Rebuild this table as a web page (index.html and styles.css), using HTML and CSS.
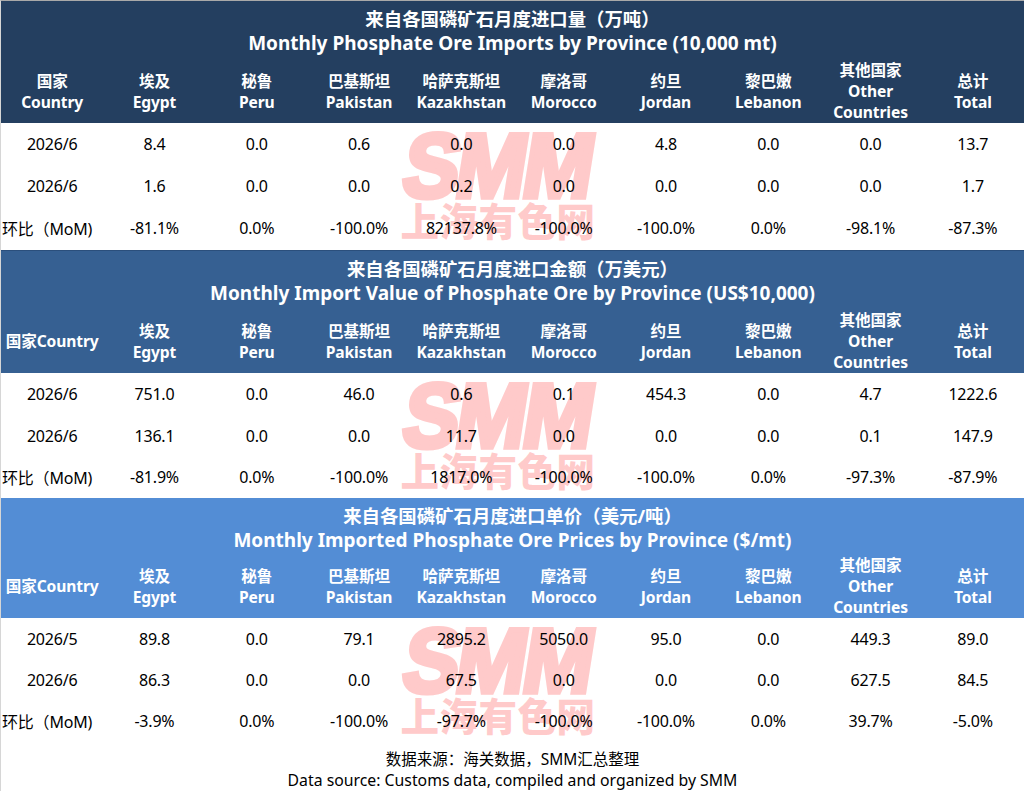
FILE: index.html
```html
<!DOCTYPE html>
<html lang="zh-CN">
<head>
<meta charset="utf-8">
<title>Phosphate Ore Imports</title>
<link rel="stylesheet" href="styles.css">
</head>
<body>
<div class="sheet">
  <section class="block block-1">
    <header class="block-head">
      <div class="title">
        <div class="title-cn">来自各国磷矿石月度进口量（万吨）</div>
        <div class="title-en">Monthly Phosphate Ore Imports by Province (10,000 mt)</div>
      </div>
      <div class="cols">
        <div class="col"><span>国家</span><span>Country</span></div>
        <div class="col"><span>埃及</span><span>Egypt</span></div>
        <div class="col"><span>秘鲁</span><span>Peru</span></div>
        <div class="col"><span>巴基斯坦</span><span>Pakistan</span></div>
        <div class="col"><span>哈萨克斯坦</span><span>Kazakhstan</span></div>
        <div class="col"><span>摩洛哥</span><span>Morocco</span></div>
        <div class="col"><span>约旦</span><span>Jordan</span></div>
        <div class="col"><span>黎巴嫩</span><span>Lebanon</span></div>
        <div class="col"><span>其他国家</span><span>Other</span><span>Countries</span></div>
        <div class="col"><span>总计</span><span>Total</span></div>
      </div>
    </header>
    <div class="block-body">
      <div class="wm"><div class="wm-smm">SMM</div><div class="wm-cn">上海有色网</div></div>
      <div class="row"><div>2026/6</div><div>8.4</div><div>0.0</div><div>0.6</div><div>0.0</div><div>0.0</div><div>4.8</div><div>0.0</div><div>0.0</div><div>13.7</div></div>
      <div class="row"><div>2026/6</div><div>1.6</div><div>0.0</div><div>0.0</div><div>0.2</div><div>0.0</div><div>0.0</div><div>0.0</div><div>0.0</div><div>1.7</div></div>
      <div class="row"><div class="lbl">环比（MoM)</div><div>-81.1%</div><div>0.0%</div><div>-100.0%</div><div>82137.8%</div><div>-100.0%</div><div>-100.0%</div><div>0.0%</div><div>-98.1%</div><div>-87.3%</div></div>
    </div>
  </section>

  <section class="block block-2">
    <header class="block-head">
      <div class="title">
        <div class="title-cn">来自各国磷矿石月度进口金额（万美元）</div>
        <div class="title-en">Monthly Import Value of Phosphate Ore by Province (US$10,000)</div>
      </div>
      <div class="cols">
        <div class="col"><span>国家Country</span></div>
        <div class="col"><span>埃及</span><span>Egypt</span></div>
        <div class="col"><span>秘鲁</span><span>Peru</span></div>
        <div class="col"><span>巴基斯坦</span><span>Pakistan</span></div>
        <div class="col"><span>哈萨克斯坦</span><span>Kazakhstan</span></div>
        <div class="col"><span>摩洛哥</span><span>Morocco</span></div>
        <div class="col"><span>约旦</span><span>Jordan</span></div>
        <div class="col"><span>黎巴嫩</span><span>Lebanon</span></div>
        <div class="col"><span>其他国家</span><span>Other</span><span>Countries</span></div>
        <div class="col"><span>总计</span><span>Total</span></div>
      </div>
    </header>
    <div class="block-body">
      <div class="wm"><div class="wm-smm">SMM</div><div class="wm-cn">上海有色网</div></div>
      <div class="row"><div>2026/6</div><div>751.0</div><div>0.0</div><div>46.0</div><div>0.6</div><div>0.1</div><div>454.3</div><div>0.0</div><div>4.7</div><div>1222.6</div></div>
      <div class="row"><div>2026/6</div><div>136.1</div><div>0.0</div><div>0.0</div><div>11.7</div><div>0.0</div><div>0.0</div><div>0.0</div><div>0.1</div><div>147.9</div></div>
      <div class="row"><div class="lbl">环比（MoM)</div><div>-81.9%</div><div>0.0%</div><div>-100.0%</div><div>1817.0%</div><div>-100.0%</div><div>-100.0%</div><div>0.0%</div><div>-97.3%</div><div>-87.9%</div></div>
    </div>
  </section>

  <section class="block block-3">
    <header class="block-head">
      <div class="title">
        <div class="title-cn">来自各国磷矿石月度进口单价（美元/吨）</div>
        <div class="title-en">Monthly Imported Phosphate Ore Prices by Province ($/mt)</div>
      </div>
      <div class="cols">
        <div class="col"><span>国家Country</span></div>
        <div class="col"><span>埃及</span><span>Egypt</span></div>
        <div class="col"><span>秘鲁</span><span>Peru</span></div>
        <div class="col"><span>巴基斯坦</span><span>Pakistan</span></div>
        <div class="col"><span>哈萨克斯坦</span><span>Kazakhstan</span></div>
        <div class="col"><span>摩洛哥</span><span>Morocco</span></div>
        <div class="col"><span>约旦</span><span>Jordan</span></div>
        <div class="col"><span>黎巴嫩</span><span>Lebanon</span></div>
        <div class="col"><span>其他国家</span><span>Other</span><span>Countries</span></div>
        <div class="col"><span>总计</span><span>Total</span></div>
      </div>
    </header>
    <div class="block-body">
      <div class="wm"><div class="wm-smm">SMM</div><div class="wm-cn">上海有色网</div></div>
      <div class="row"><div>2026/5</div><div>89.8</div><div>0.0</div><div>79.1</div><div>2895.2</div><div>5050.0</div><div>95.0</div><div>0.0</div><div>449.3</div><div>89.0</div></div>
      <div class="row"><div>2026/6</div><div>86.3</div><div>0.0</div><div>0.0</div><div>67.5</div><div>0.0</div><div>0.0</div><div>0.0</div><div>627.5</div><div>84.5</div></div>
      <div class="row"><div class="lbl">环比（MoM)</div><div>-3.9%</div><div>0.0%</div><div>-100.0%</div><div>-97.7%</div><div>-100.0%</div><div>-100.0%</div><div>0.0%</div><div>39.7%</div><div>-5.0%</div></div>
    </div>
  </section>

  <footer class="source">
    <div class="source-cn">数据来源：海关数据，SMM汇总整理</div>
    <div class="source-en">Data source: Customs data, compiled and organized by SMM</div>
  </footer>
</div>
</body>
</html>
```

FILE: styles.css
```css
html, body {
  margin: 0;
  padding: 0;
  background: #ffffff;
}

body {
  font-family: "Noto Sans", "Noto Sans CJK SC", sans-serif;
  color: #000000;
}

.sheet {
  width: 1024px;
  box-sizing: border-box;
  border-top: 1px solid #a9a9a9;
  border-left: 1px solid #d6d6d6;
}

.block-head {
  color: #ffffff;
  font-weight: 700;
  display: flex;
  flex-direction: column;
}

.block-1 .block-head { background: #243f60; height: 122px; }
.block-2 .block-head { background: #366092; height: 122px; margin-top: 1px; border-top: 1px solid #2b4f7c; }
.block-3 .block-head { background: #538dd5; height: 120px; }

.title {
  padding-top: 5px;
  height: 54px;
  text-align: center;
}

.title-cn {
  font-size: 18.4px;
  line-height: 25px;
}

.title-en {
  font-size: 19px;
  line-height: 25px;
}

.cols {
  flex: 1;
  display: grid;
  grid-template-columns: repeat(10, 1fr);
  align-items: center;
}

.col {
  display: flex;
  flex-direction: column;
  align-items: center;
  font-size: 15.6px;
  line-height: 21px;
  letter-spacing: -0.1px;
  white-space: nowrap;
}

.block-body {
  position: relative;
}

.row {
  position: relative;
  z-index: 1;
  display: grid;
  grid-template-columns: repeat(10, 1fr);
  align-items: center;
  text-align: center;
  font-size: 16px;
  letter-spacing: -0.2px;
  white-space: nowrap;
}

.block-1 .row { height: 42px; }
.block-2 .row { height: 41.7px; }
.block-3 .row { height: 41px; }

.lbl {
  text-align: left;
  padding-left: 1px;
}

.wm {
  position: absolute;
  z-index: 0;
  left: 398px;
  top: 10px;
  width: 198px;
  color: #ffcaca;
  text-align: center;
  pointer-events: none;
}

.wm-smm {
  font-family: "Liberation Sans", "DejaVu Sans", sans-serif;
  font-weight: 700;
  font-size: 84px;
  line-height: 66px;
  letter-spacing: -3px;
  -webkit-text-stroke: 5px #ffcaca;
  transform: skewX(-9deg) scaleY(1.08);
}

.wm-cn {
  font-family: "Noto Sans CJK SC", sans-serif;
  font-weight: 900;
  font-size: 38.5px;
  line-height: 40px;
  letter-spacing: 0.5px;
}

.source {
  padding-top: 8px;
  text-align: center;
  line-height: 21px;
}

.source-cn { font-size: 15.5px; }
.source-en { font-size: 15.8px; }
```
